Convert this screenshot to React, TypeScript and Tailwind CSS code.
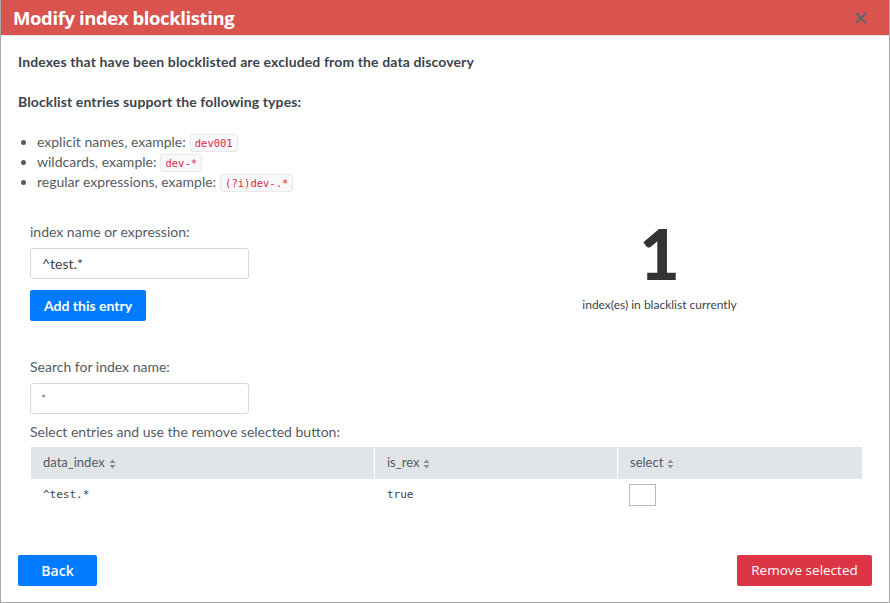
import React from "react";

const SortIcon = () => (
  <svg width="7" height="10" viewBox="0 0 7 10" className="ml-1 inline-block">
    <path d="M3.5 0.5 L6.5 4 H0.5 Z" fill="#8a919a" />
    <path d="M3.5 9.5 L6.5 6 H0.5 Z" fill="#8a919a" />
  </svg>
);

const Code = ({ children }: { children: React.ReactNode }) => (
  <code className="ml-1 inline-block rounded-[3px] border border-[#e6e8eb] bg-[#f7f8fa] px-[4px] py-[1px] font-['DejaVu_Sans_Mono',monospace] text-[10.5px] leading-[14px] text-[#e2264d]">
    {children}
  </code>
);

const rows = [{ data_index: "^test.*", is_rex: "true" }];

export default function App() {
  return (
    <div className="h-[603px] w-[890px] overflow-hidden bg-white font-['Lato',sans-serif] text-[#3c444d]">
      <div className="flex h-full flex-col border-x border-b border-[#a7a7a7]">
        {/* Header */}
        <div className="flex h-[36px] shrink-0 items-center justify-between border-b border-[#e6e6e6] bg-[#d9534f] pl-[12px] pr-[22px]">
          <h1 className="font-['Open_Sans',sans-serif] text-[18.5px] font-bold tracking-[-0.4px] text-white">
            Modify index blocklisting
          </h1>
          <svg width="12" height="12" viewBox="0 0 12 12">
            <path d="M1 1 L11 11 M11 1 L1 11" stroke="#5b6670" strokeWidth="1.8" />
          </svg>
        </div>

        {/* Body */}
        <div className="flex flex-1 flex-col px-[17px] pt-[16px]">
          <p className="text-[14px] font-bold leading-[20px] tracking-[0.12px]">
            Indexes that have been blocklisted are excluded from the data discovery
          </p>
          <p className="mt-[20px] text-[14px] font-bold leading-[20px] tracking-[0.12px]">
            Blocklist entries support the following types:
          </p>
          <ul className="mt-[20px] list-disc pl-[19px] text-[14px] leading-[20px] text-[#555c63]">
            <li>
              explicit names, example:<Code>dev001</Code>
            </li>
            <li>
              wildcards, example:<Code>dev-*</Code>
            </li>
            <li>
              regular expressions, example:<Code>(?i)dev-.*</Code>
            </li>
          </ul>

          <div className="mt-[30px] grid grid-cols-2 px-[12px]">
            <div className="flex flex-col">
              <label className="text-[14px] leading-[20px] text-[#555c63]">
                index name or expression:
              </label>
              <div className="mt-[6px] flex h-[31px] w-[219px] items-center rounded-[3px] border border-[#d5d9de] px-[11px] text-[14px] text-[#3c444d]">
                ^test.*
              </div>
              <button className="mt-[11px] h-[31px] w-[116px] rounded-[2px] bg-[#007bff] text-[14px] font-bold text-white">
                Add this entry
              </button>
            </div>
            <div className="flex flex-col items-center pl-[14px]">
              <div className="font-['Lato',sans-serif] text-[70px] font-black leading-[62px] text-[#333]">
                1
              </div>
              <div className="mt-[14px] text-[12px] leading-[14px] text-[#3c444d]">
                index(es) in blacklist currently
              </div>
            </div>
          </div>

          <div className="mt-[36px] flex flex-col px-[12px]">
            <label className="text-[14px] leading-[20px] text-[#555c63]">
              Search for index name:
            </label>
            <div className="mt-[6px] flex h-[31px] w-[219px] items-center rounded-[3px] border border-[#d5d9de] px-[10px] text-[12px] text-[#777]">
              *
            </div>
            <p className="mt-[8px] text-[14px] leading-[20px] text-[#555c63]">
              Select entries and use the remove selected button:
            </p>
            <table className="mt-[5px] w-[833px] border-separate border-spacing-x-[1px] border-spacing-y-0 text-left">
              <thead>
                <tr className="h-[32px] text-[13px] text-[#555c63]">
                  <th className="w-[343px] bg-[#e1e5ea] px-[12px] font-normal">
                    data_index
                    <SortIcon />
                  </th>
                  <th className="w-[242px] bg-[#e1e5ea] px-[12px] font-normal">
                    is_rex
                    <SortIcon />
                  </th>
                  <th className="bg-[#e1e5ea] px-[12px] font-normal">
                    select
                    <SortIcon />
                  </th>
                </tr>
              </thead>
              <tbody>
                {rows.map((r) => (
                  <tr key={r.data_index} className="h-[32px] font-['DejaVu_Sans_Mono',monospace] text-[11px] text-[#3c444d]">
                    <td className="px-[12px]">{r.data_index}</td>
                    <td className="px-[12px]">{r.is_rex}</td>
                    <td className="px-[11px]">
                      <div className="h-[22px] w-[27px] border-[1.5px] border-[#b8b8b8] bg-white" />
                    </td>
                  </tr>
                ))}
              </tbody>
            </table>
          </div>
        </div>

        {/* Footer */}
        <div className="flex shrink-0 items-center justify-between px-[17px] pb-[16px]">
          <button className="h-[31px] w-[79px] rounded-[2px] bg-[#007bff] font-['Open_Sans',sans-serif] text-[14px] font-semibold text-white">
            Back
          </button>
          <button className="h-[31px] w-[135px] rounded-[2px] bg-[#dc3545] font-['Open_Sans',sans-serif] text-[13.5px] text-white">
            Remove selected
          </button>
        </div>
      </div>
    </div>
  );
}
